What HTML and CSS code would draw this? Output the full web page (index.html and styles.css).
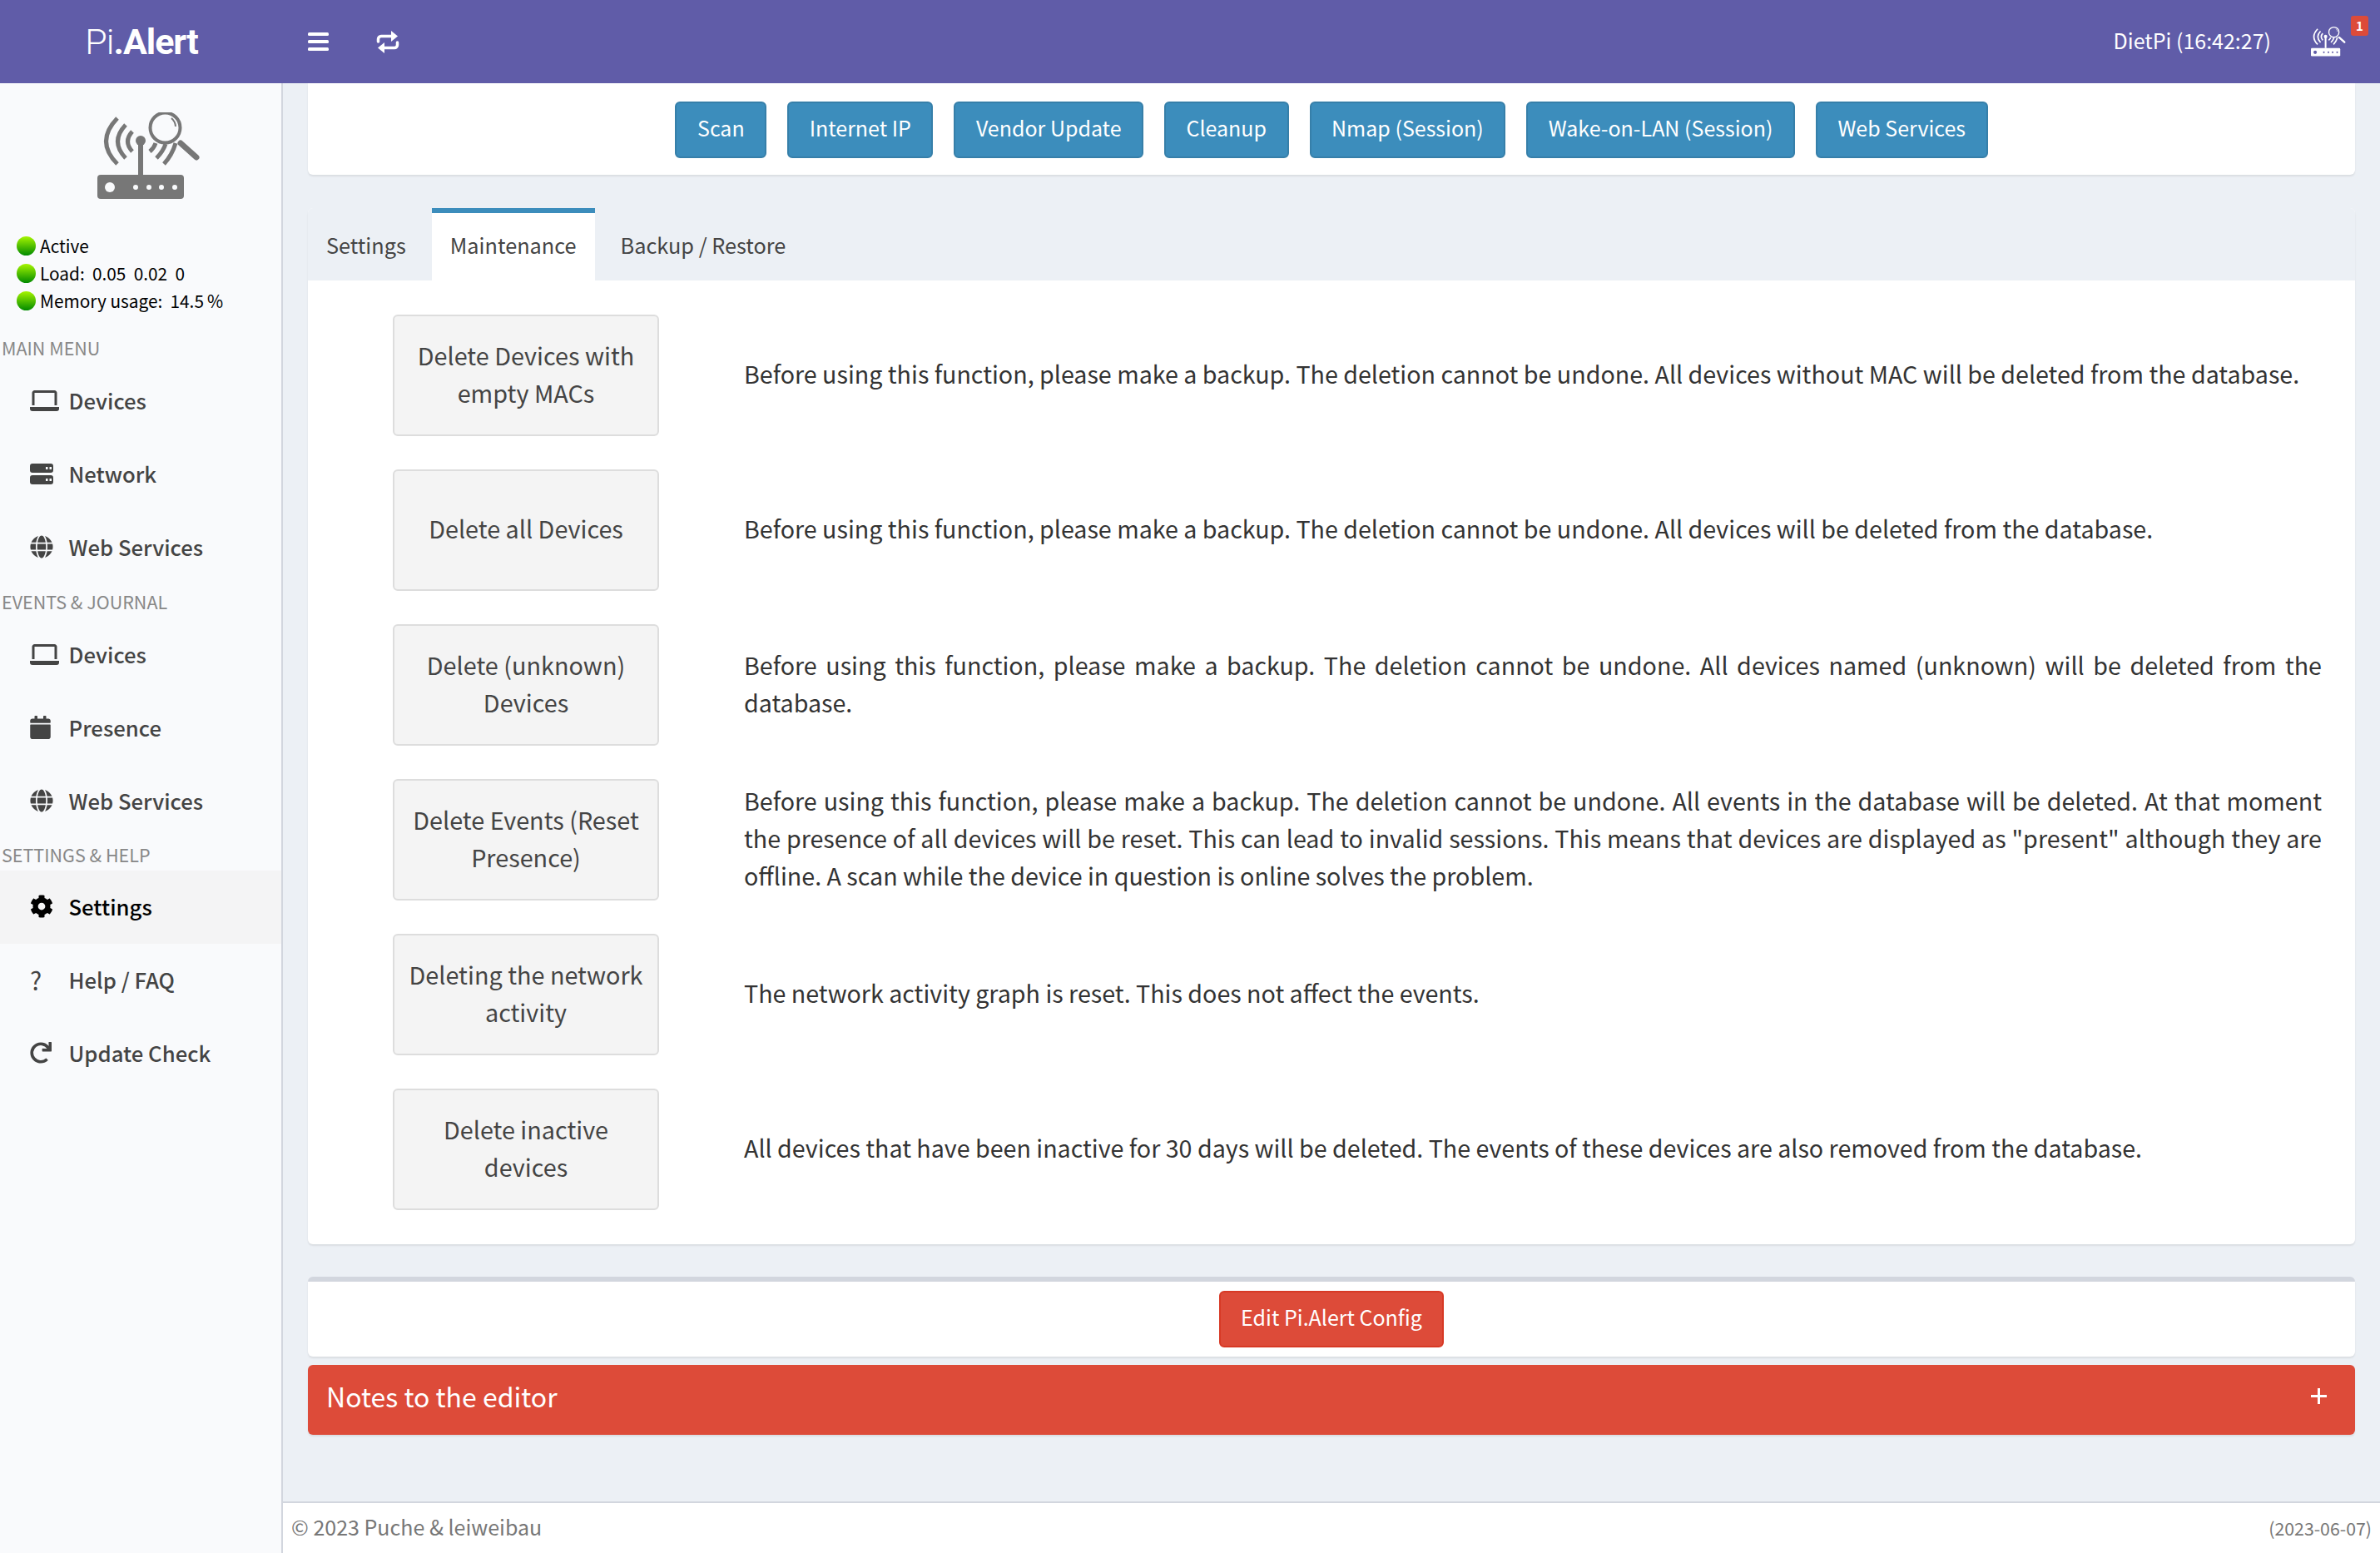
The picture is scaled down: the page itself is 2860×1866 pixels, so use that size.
FILE: index.html
```html
<!DOCTYPE html>
<html lang="en">

<head>
    <meta charset="UTF-8">
    <meta name="viewport" content="width=device-width, initial-scale=1.0">
    <title>Pi.Alert - Maintenance</title>
    <link rel="stylesheet" href="styles.css">
</head>

<body>
    <svg class="defs" width="0" height="0">
        <symbol id="router" viewBox="117 135 124 104">
            <rect x="117" y="210" width="104" height="29" rx="4" fill="currentColor" />
            <circle cx="132" cy="225" r="6" fill="var(--hole)" />
            <circle cx="163" cy="225" r="3" fill="var(--hole)" />
            <circle cx="179" cy="225" r="3" fill="var(--hole)" />
            <circle cx="194" cy="225" r="3" fill="var(--hole)" />
            <circle cx="210" cy="225" r="3" fill="var(--hole)" />
            <rect x="166" y="170" width="6" height="40" fill="currentColor" />
            <circle cx="169" cy="169" r="6" fill="currentColor" />
            <g fill="none" stroke="currentColor" stroke-width="5">
                <path d="M159 158Q148 170 159 182" />
                <path d="M151 150Q132 170 151 190" />
                <path d="M141 142Q114 170 141 197" />
                <path d="M180 182Q185 178 187 172" />
                <path d="M188 190Q196 182 199 173" />
                <path d="M197 197Q207 186 211 172" />
                <circle cx="198.500" cy="153.500" r="18" stroke-width="4" />
                <path d="M206 142a14 14 0 0 1 5 10" stroke-width="2" />
                <path d="M217 172l19 17" stroke-width="7" stroke-linecap="round" />
            </g>
        </symbol>
        <symbol id="laptop" viewBox="0 0 35 25">
            <path d="M4 18V3a1.5 1.5 0 0 1 1.500-1.500h24A1.500 1.500 0 0 1 31 3v15" fill="none" stroke="currentColor" stroke-width="3" />
            <path d="M0 20h35v2a3 3 0 0 1-3 3H3a3 3 0 0 1-3-3z" fill="currentColor" />
        </symbol>
        <symbol id="server" viewBox="0 0 28 25">
            <path fill-rule="evenodd" fill="currentColor" d="M3 0h22a3 3 0 0 1 3 3v5a3 3 0 0 1-3 3H3a3 3 0 0 1-3-3V3a3 3 0 0 1 3-3zm16 4v3h2.500V4zm4.500 0v3H26V4zM3 14h22a3 3 0 0 1 3 3v5a3 3 0 0 1-3 3H3a3 3 0 0 1-3-3v-5a3 3 0 0 1 3-3zm16 4v3h2.500v-3zm4.500 0v3H26v-3z" />
        </symbol>
        <symbol id="globe" viewBox="0 0 496 512">
            <path fill="currentColor" d="M336.5 160C322 70.7 287.8 8 248 8s-74 62.7-88.5 152h177zM152 256c0 22.2 1.2 43.5 3.3 64h185.3c2.1-20.5 3.3-41.8 3.3-64s-1.2-43.5-3.3-64H155.3c-2.1 20.5-3.3 41.8-3.3 64zm324.7-96c-28.6-67.9-86.5-120.4-158-141.6 24.4 33.8 41.2 84.7 50 141.6h108zM177.2 18.4C105.8 39.6 47.8 92.1 19.3 160h108c8.7-56.9 25.5-107.8 49.9-141.6zM487.4 192H372.7c2.1 21 3.3 42.5 3.3 64s-1.2 43-3.3 64h114.6c5.5-20.5 8.6-41.8 8.6-64s-3.1-43.5-8.5-64zM120 256c0-21.5 1.2-43 3.3-64H8.6C3.2 212.5 0 233.8 0 256s3.2 43.5 8.6 64h114.6c-2-21-3.2-42.5-3.2-64zm39.5 96c14.5 89.3 48.7 152 88.5 152s74-62.7 88.5-152h-177zm159.3 141.6c71.4-21.2 129.4-73.7 158-141.6h-108c-8.8 56.9-25.6 107.8-50 141.6zM19.3 352c28.6 67.9 86.5 120.4 158 141.6-24.4-33.8-41.2-84.7-50-141.6h-108z" />
        </symbol>
        <symbol id="calendar" viewBox="0 0 448 512">
            <path fill="currentColor" d="M12 192h424c6.6 0 12 5.4 12 12v260c0 26.500-21.500 48-48 48H48c-26.500 0-48-21.500-48-48V204c0-6.600 5.400-12 12-12zm436-44v-36c0-26.500-21.500-48-48-48h-48V12c0-6.600-5.400-12-12-12h-40c-6.600 0-12 5.400-12 12v52H160V12c0-6.600-5.400-12-12-12h-40c-6.600 0-12 5.400-12 12v52H48C21.500 64 0 85.500 0 112v36c0 6.600 5.400 12 12 12h424c6.600 0 12-5.400 12-12z" />
        </symbol>
        <symbol id="cog" viewBox="0 0 512 512">
            <path fill="currentColor" d="M487.4 315.7l-42.6-24.6c4.3-23.2 4.3-47 0-70.2l42.6-24.6c4.9-2.8 7.1-8.6 5.5-14-11.1-35.6-30-67.8-54.7-94.6-3.8-4.1-10-5.1-14.8-2.3L380.8 110c-17.9-15.4-38.5-27.3-60.8-35.1V25.8c0-5.6-3.9-10.5-9.4-11.7-36.7-8.2-74.3-7.8-109.2 0-5.5 1.2-9.4 6.1-9.4 11.7V75c-22.2 7.9-42.8 19.8-60.8 35.1L88.7 85.5c-4.9-2.8-11-1.9-14.8 2.3-24.7 26.7-43.6 58.9-54.7 94.6-1.7 5.4.6 11.2 5.5 14L67.3 221c-4.3 23.2-4.3 47 0 70.2l-42.6 24.6c-4.9 2.8-7.1 8.6-5.5 14 11.1 35.6 30 67.8 54.7 94.6 3.8 4.1 10 5.1 14.8 2.3l42.6-24.6c17.9 15.4 38.5 27.3 60.8 35.1v49.2c0 5.6 3.9 10.5 9.4 11.7 36.7 8.2 74.3 7.8 109.2 0 5.5-1.2 9.4-6.1 9.4-11.7v-49.2c22.2-7.9 42.8-19.8 60.8-35.1l42.6 24.6c4.9 2.8 11 1.9 14.8-2.3 24.7-26.7 43.6-58.9 54.7-94.6 1.5-5.5-.7-11.3-5.6-14.1zM256 336c-44.1 0-80-35.9-80-80s35.9-80 80-80 80 35.9 80 80-35.9 80-80 80z" />
        </symbol>
        <symbol id="redo" viewBox="0 0 512 512">
            <path fill="currentColor" d="M500.33 0h-47.41a12 12 0 0 0-12 12.57l4 82.76A247.42 247.42 0 0 0 256 8C119.34 8 7.9 119.53 8 256.19 8.1 393.07 119.1 504 256 504a247.1 247.1 0 0 0 166.18-63.91 12 12 0 0 0 .48-17.43l-34-34a12 12 0 0 0-16.38-.55A176 176 0 1 1 402.1 157.8l-101.53-4.87a12 12 0 0 0-12.57 12v47.41a12 12 0 0 0 12 12h200.33a12 12 0 0 0 12-12V12a12 12 0 0 0-12-12z" />
        </symbol>
    </svg>

    <header class="topbar">
        <div class="brand"><span class="brand-light">Pi</span><span class="brand-bold">.Alert</span></div>
        <button class="nav-icon menu-toggle" aria-label="Menu">
            <svg width="25" height="22" viewBox="0 0 25 22">
                <rect y="0" width="25" height="4" rx="1.500" fill="currentColor" />
                <rect y="9" width="25" height="4" rx="1.500" fill="currentColor" />
                <rect y="18" width="25" height="4" rx="1.500" fill="currentColor" />
            </svg>
        </button>
        <button class="nav-icon reload" aria-label="Reload">
            <svg width="28" height="27" viewBox="0 0 28 27">
                <g fill="none" stroke="currentColor" stroke-width="3.500" stroke-linecap="round">
                    <path d="M2.500 13V10a3.500 3.500 0 0 1 3.500-3.500H19" />
                    <path d="M25.500 14v3a3.500 3.500 0 0 1-3.500 3.500H9" />
                </g>
                <path d="M18 0l8 6.500-8 6.500z" fill="currentColor" />
                <path d="M10 14l-8 6.500 8 6.500z" fill="currentColor" />
            </svg>
        </button>
        <div class="topbar-right">
            <span class="host">DietPi (16:42:27)</span>
            <span class="alert-icon">
                <svg class="router-small" width="42" height="38"><use href="#router" /></svg>
                <span class="badge">1</span>
            </span>
        </div>
    </header>

    <div class="layout">
        <aside class="sidebar">
            <div class="logo"><svg class="router-big" width="124" height="104"><use href="#router" /></svg></div>
            <ul class="status">
                <li><i class="dot"></i>Active</li>
                <li><i class="dot"></i>Load:&nbsp; 0.05&nbsp; 0.02&nbsp; 0</li>
                <li><i class="dot"></i>Memory usage:&nbsp; 14.5&#8201;%</li>
            </ul>
            <div class="menu-label">MAIN MENU</div>
            <a class="menu-item"><span class="menu-icon"><svg width="35" height="25"><use href="#laptop" /></svg></span>Devices</a>
            <a class="menu-item"><span class="menu-icon"><svg width="28" height="25"><use href="#server" /></svg></span>Network</a>
            <a class="menu-item"><span class="menu-icon"><svg width="28" height="28"><use href="#globe" /></svg></span>Web Services</a>
            <div class="menu-label label-events">EVENTS &amp; JOURNAL</div>
            <a class="menu-item"><span class="menu-icon"><svg width="35" height="25"><use href="#laptop" /></svg></span>Devices</a>
            <a class="menu-item"><span class="menu-icon"><svg width="25" height="28"><use href="#calendar" /></svg></span>Presence</a>
            <a class="menu-item"><span class="menu-icon"><svg width="28" height="28"><use href="#globe" /></svg></span>Web Services</a>
            <div class="menu-label label-help">SETTINGS &amp; HELP</div>
            <a class="menu-item active"><span class="menu-icon"><svg width="28" height="28"><use href="#cog" /></svg></span>Settings</a>
            <a class="menu-item"><span class="menu-icon question">?</span>Help / FAQ</a>
            <a class="menu-item"><span class="menu-icon"><svg width="26" height="26"><use href="#redo" /></svg></span>Update Check</a>
        </aside>

        <div class="content-wrap">
            <main class="content">
                <section class="box action-box">
                    <button class="btn btn-blue">Scan</button>
                    <button class="btn btn-blue">Internet IP</button>
                    <button class="btn btn-blue">Vendor Update</button>
                    <button class="btn btn-blue">Cleanup</button>
                    <button class="btn btn-blue">Nmap (Session)</button>
                    <button class="btn btn-blue">Wake-on-LAN (Session)</button>
                    <button class="btn btn-blue">Web Services</button>
                </section>

                <section class="box tabs-box">
                    <div class="tabs">
                        <a class="tab">Settings</a>
                        <a class="tab active">Maintenance</a>
                        <a class="tab">Backup / Restore</a>
                    </div>
                    <div class="tasks">
                        <div class="task">
                            <button class="btn-task">Delete Devices with empty MACs</button>
                            <p>Before using this function, please make a backup. The deletion cannot be undone. All devices without MAC will be deleted from the database.</p>
                        </div>
                        <div class="task">
                            <button class="btn-task">Delete all Devices</button>
                            <p>Before using this function, please make a backup. The deletion cannot be undone. All devices will be deleted from the database.</p>
                        </div>
                        <div class="task">
                            <button class="btn-task">Delete (unknown) Devices</button>
                            <p>Before using this function, please make a backup. The deletion cannot be undone. All devices named (unknown) will be deleted from the database.</p>
                        </div>
                        <div class="task">
                            <button class="btn-task">Delete Events (Reset Presence)</button>
                            <p>Before using this function, please make a backup. The deletion cannot be undone. All events in the database will be deleted. At that moment the presence of all devices will be reset. This can lead to invalid sessions. This means that devices are displayed as "present" although they are offline. A scan while the device in question is online solves the problem.</p>
                        </div>
                        <div class="task">
                            <button class="btn-task">Deleting the network activity</button>
                            <p>The network activity graph is reset. This does not affect the events.</p>
                        </div>
                        <div class="task">
                            <button class="btn-task">Delete inactive devices</button>
                            <p>All devices that have been inactive for 30 days will be deleted. The events of these devices are also removed from the database.</p>
                        </div>
                    </div>
                </section>

                <section class="box config-box">
                    <button class="btn btn-red">Edit Pi.Alert Config</button>
                </section>

                <section class="notes-bar">
                    <span class="notes-title">Notes to the editor</span>
                    <svg class="notes-plus" width="19" height="19" viewBox="0 0 19 19">
                        <path d="M9.500 0v19M0 9.500h19" fill="none" stroke="currentColor" stroke-width="3" />
                    </svg>
                </section>
            </main>

            <footer class="footer">
                <span class="footer-copy">© 2023 Puche &amp; leiweibau</span>
                <span class="footer-date">(2023-06-07)</span>
            </footer>
        </div>
    </div>
</body>

</html>
```

FILE: styles.css
```css
* {
    box-sizing: border-box;
}

html,
body {
    height: 100%;
}

body {
    margin: 0;
    display: flex;
    flex-direction: column;
    overflow: hidden;
    background-color: #ecf0f5;
    color: #333;
    font-family: "Noto Sans CJK SC", "Noto Sans", sans-serif;
    font-size: 28px;
    line-height: 1.43;
}

.defs {
    position: absolute;
}

button {
    font: inherit;
}

/* top bar */
.topbar {
    flex: 0 0 100px;
    display: flex;
    align-items: center;
    background-color: #605ca8;
    color: #fff;
}

.brand {
    width: 340px;
    padding-top: 2px;
    text-align: center;
    font-family: Roboto, "Liberation Sans", sans-serif;
    font-size: 43px;
    letter-spacing: -1px;
}

.brand-light {
    font-weight: 300;
}

.brand-bold {
    font-weight: 700;
}

.nav-icon {
    display: flex;
    padding: 0;
    border: 0;
    background: none;
    color: #fff;
}

.menu-toggle {
    margin-left: 30px;
}

.reload {
    margin-left: 57px;
}

.topbar-right {
    margin-left: auto;
    display: flex;
    align-items: center;
}

.host {
    margin-right: 48px;
    padding-bottom: 2px;
    font-size: 25px;
}

.alert-icon {
    position: relative;
    display: flex;
    margin-right: 41px;
    --hole: #605ca8;
}

.badge {
    position: absolute;
    top: -12px;
    right: -27px;
    width: 21px;
    height: 24px;
    border-radius: 3px;
    background-color: #dd4b39;
    color: #fff;
    font-size: 15px;
    font-weight: 700;
    line-height: 24px;
    text-align: center;
}

/* sidebar */
.layout {
    flex: 1;
    display: flex;
    min-height: 0;
}

.sidebar {
    flex: 0 0 340px;
    background-color: #f9fafc;
    border-right: 2px solid #d2d6de;
    color: #444;
}

.logo {
    display: flex;
    padding: 35px 0 0 117px;
    height: 179px;
    color: #777;
    --hole: #f9fafc;
}

.status {
    margin: 0;
    padding: 0 0 0 20px;
    list-style: none;
    color: #000;
    font-size: 20.800px;
    line-height: 33px;
    height: 119px;
}

.status li {
    display: flex;
    align-items: center;
    height: 33px;
    white-space: pre;
}

.dot {
    flex: none;
    width: 23px;
    height: 23px;
    margin-right: 5px;
    border-radius: 50%;
    background: linear-gradient(#a6f500, #008a00);
}

.menu-label {
    height: 40px;
    padding-left: 2px;
    color: #888;
    font-size: 21.500px;
    line-height: 40px;
    white-space: nowrap;
}

.label-events {
    margin-top: 1px;
}

.label-help {
    height: 39px;
}

.menu-item {
    display: flex;
    align-items: center;
    height: 88px;
    padding: 0 0 2px 36px;
    font-size: 25.700px;
    font-weight: 500;
}

.menu-item.active {
    background-color: #f4f4f5;
    color: #000;
}

.menu-icon {
    display: flex;
    width: 46.500px;
    flex: none;
}

.question {
    font-weight: 400;
    line-height: 1;
    font-size: 30px;
}

/* main column */
.content-wrap {
    flex: 1;
    display: flex;
    flex-direction: column;
    min-width: 0;
}

.content {
    flex: 1;
    padding: 0 30px;
}

.box {
    background-color: #fff;
    border-radius: 6px;
    box-shadow: 0 2px 2px rgba(0, 0, 0, 0.08);
}

.action-box {
    height: 110px;
    margin-bottom: 40px;
    display: flex;
    justify-content: center;
    align-items: center;
    gap: 25px;
    border-radius: 0 0 6px 6px;
    padding-top: 2px;
}

.btn {
    height: 68px;
    padding: 0 24.500px 5px;
    border: 2px solid;
    border-radius: 6px;
    color: #fff;
    font-size: 25px;
    white-space: nowrap;
}

.btn-blue {
    background-color: #3c8dbc;
    border-color: #367fa9;
}

.btn-red {
    background-color: #dd4b39;
    border-color: #d73925;
}

/* tabs */
.tabs-box {
    height: 1245px;
    margin-bottom: 39px;
}

.tabs {
    display: flex;
    height: 87px;
    padding-left: 0;
    background-color: #ecf0f5;
    border-radius: 6px 6px 0 0;
}

.tab {
    display: block;
    height: 87px;
    margin-right: 9px;
    padding: 20px 22px 0;
    border-top: 6px solid transparent;
    color: #444;
    font-size: 25.300px;
    white-space: nowrap;
}

.tab.active {
    background-color: #fff;
    border-top-color: #3c8dbc;
}

.tasks {
    display: flex;
    flex-direction: column;
    gap: 40px;
    padding: 41px 40px 0 102px;
}

.task {
    display: flex;
    align-items: center;
    height: 146px;
}

.btn-task {
    flex: 0 0 320px;
    height: 146px;
    padding: 0 16px 5px;
    border: 2px solid #ddd;
    border-radius: 6px;
    background-color: #f4f4f4;
    color: #444;
    font-size: 28.800px;
    line-height: 45px;
}

.task p {
    flex: 1;
    margin: 0 0 0 102px;
    padding-bottom: 5px;
    font-size: 28.650px;
    line-height: 45px;
    text-align: justify;
}

/* config and notes */
.config-box {
    height: 96px;
    margin-bottom: 10px;
    padding-top: 11px;
    display: flex;
    justify-content: center;
    border-top: 6px solid #d2d6de;
}

.notes-bar {
    height: 84px;
    padding: 0 34px 0 22px;
    display: flex;
    align-items: center;
    justify-content: space-between;
    border-radius: 6px;
    background-color: #dd4b39;
    color: #fff;
    box-shadow: 0 2px 2px rgba(0, 0, 0, 0.08);
}

.notes-title {
    padding-bottom: 8px;
    font-size: 32px;
}

.notes-plus {
    margin-bottom: 10px;
}

/* footer */
.footer {
    flex: 0 0 62px;
    display: flex;
    align-items: center;
    justify-content: space-between;
    padding: 0 10px;
    background-color: #fff;
    border-top: 2px solid #d2d6de;
    color: #777;
}

.footer-copy {
    padding-bottom: 2px;
    font-size: 25px;
}

.footer-date {
    font-size: 21.300px;
}
```
